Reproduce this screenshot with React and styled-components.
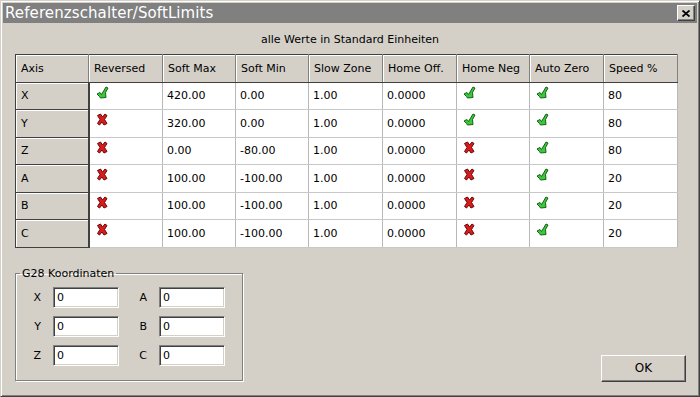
import React from 'react';
import styled, { createGlobalStyle } from 'styled-components';

const GlobalStyle = createGlobalStyle`
  html, body {
    margin: 0;
    padding: 0;
    background: #d4d0c8;
  }
  * {
    box-sizing: border-box;
  }
`;

// Window frame
const Window = styled.div`
  width: 700px;
  height: 397px;
  display: flex;
  flex-direction: column;
  background: #d4d0c8;
  border: 1px solid;
  border-color: #d4d0c8 #404040 #404040 #d4d0c8;
  box-shadow: inset 1px 1px #fff, inset -1px -1px #808080;
  padding: 2px 2px 2px 2px;
  font-family: "DejaVu Sans", "Liberation Sans", sans-serif;
  font-size: 11px;
  color: #000;
`;

const TitleBar = styled.div`
  height: 20px;
  background: #808080;
  display: flex;
  align-items: center;
  justify-content: space-between;
  padding: 0 2px 0 2px;
`;

const Title = styled.span`
  color: #fff;
  font-size: 15px;
  letter-spacing: 0.1px;
`;

const CloseButton = styled.button`
  width: 18px;
  height: 16px;
  padding: 0;
  background: #d4d0c8;
  border: 1px solid;
  border-color: #fff #404040 #404040 #fff;
  box-shadow: inset -1px -1px #808080;
  display: flex;
  align-items: center;
  justify-content: center;
`;

const Body = styled.div`
  flex: 1;
  display: flex;
  flex-direction: column;
  padding: 10px 20px 13px 12px;
`;

const Caption = styled.div`
  height: 14px;
  line-height: 14px;
  text-align: center;
  padding-left: 8px;
  margin-bottom: 7px;
`;

// Grid
const Grid = styled.table`
  border-collapse: collapse;
  table-layout: fixed;
  width: 662px;
  border: 1px solid;
  border-color: #404040 #e8e8e8 #e8e8e8 #404040;
  background: #fff;
`;

const HeadCell = styled.th`
  height: 27.5px;
  padding: 0 0 0 5px;
  text-align: left;
  font-weight: normal;
  background: #d4d0c8;
  border-right: 1px solid #808080;
  border-bottom: 1px solid #404040;
  box-shadow: inset 1px 1px #fff;
  white-space: nowrap;
`;

const AxisCell = styled.td`
  height: 27.5px;
  padding: 0 0 0 5px;
  background: #d4d0c8;
  border-right: 2px solid #404040;
  border-bottom: 1px solid #404040;
  box-shadow: inset 1px 1px #fff;
`;

const Cell = styled.td`
  height: 27.5px;
  padding: 0 0 0 4px;
  border-right: 1px solid #b8b8b8;
  border-bottom: 1px solid #c8c8c8;
  vertical-align: ${(p) => (p.$icon ? 'top' : 'middle')};
  padding-top: ${(p) => (p.$icon ? '3px' : '0')};
  padding-left: ${(p) => (p.$icon ? '6px' : '4px')};
`;

// Bottom area
const Footer = styled.div`
  margin-top: 19px;
  display: flex;
  justify-content: space-between;
  align-items: flex-end;
`;

const GroupBox = styled.fieldset`
  width: 228px;
  margin: 0;
  padding: 0;
  border: 1px solid #808080;
  box-shadow: inset 1px 1px #fff, 1px 1px #fff;
`;

const GroupTitle = styled.legend`
  margin-left: 4px;
  padding: 0 2px;
  line-height: 14px;
`;

const CoordGrid = styled.div`
  display: grid;
  grid-template-columns: 23px 66px 40px 66px;
  grid-auto-rows: 21px;
  row-gap: 8px;
  padding: 6px 0 14px 14px;
`;

const CoordLabel = styled.label`
  text-align: right;
  padding-right: 12px;
  line-height: 21px;
`;

const CoordInput = styled.input`
  width: 66px;
  height: 21px;
  margin: 0;
  padding: 0 3px;
  font: inherit;
  color: #000;
  background: #fff;
  border: 1px solid;
  border-color: #808080 #fff #fff #808080;
  box-shadow: inset 1px 1px #404040, inset -1px -1px #d4d0c8;
  outline: none;
`;

const OkButton = styled.button`
  width: 85px;
  height: 27px;
  margin: 0 -9px -1px 0;
  padding: 0;
  font: inherit;
  font-size: 12px;
  color: #000;
  background: #d4d0c8;
  border: 1px solid;
  border-color: #fff #404040 #404040 #fff;
  box-shadow: inset -1px -1px #808080;
`;

const CheckIcon = () => (
  <svg width="13" height="13" viewBox="0 0 13 13">
    <path
      d="M1 8 L4 6.5 L5.5 8.5 L10 1 L12 2 L9.5 6.5 L10 11.5 L4.5 12 L3.5 10.5 Z"
      fill="#3cc83c"
      stroke="#146014"
      strokeWidth="1"
      strokeLinejoin="round"
    />
  </svg>
);

const CrossIcon = () => (
  <svg width="13" height="13" viewBox="0 0 13 13">
    <path
      d="M1.5 2.5 L4.5 1 L6.5 4 L9 1 L11 2.5 L8.5 6.5 L11 10.5 L8 12 L6 9 L3.5 12 L1.5 10.5 L4 6.5 Z"
      fill="#d81c1c"
      stroke="#6a0808"
      strokeWidth="1"
      strokeLinejoin="round"
    />
  </svg>
);

const columns = [
  { label: 'Axis', width: 73 },
  { label: 'Reversed', width: 74 },
  { label: 'Soft Max', width: 73 },
  { label: 'Soft Min', width: 73 },
  { label: 'Slow Zone', width: 74 },
  { label: 'Home Off.', width: 74 },
  { label: 'Home Neg', width: 73 },
  { label: 'Auto Zero', width: 74 },
  { label: 'Speed %', width: 74 },
];

const axes = [
  { axis: 'X', reversed: true, max: '420.00', min: '0.00', slow: '1.00', off: '0.0000', neg: true, zero: true, speed: '80' },
  { axis: 'Y', reversed: false, max: '320.00', min: '0.00', slow: '1.00', off: '0.0000', neg: true, zero: true, speed: '80' },
  { axis: 'Z', reversed: false, max: '0.00', min: '-80.00', slow: '1.00', off: '0.0000', neg: false, zero: true, speed: '80' },
  { axis: 'A', reversed: false, max: '100.00', min: '-100.00', slow: '1.00', off: '0.0000', neg: false, zero: true, speed: '20' },
  { axis: 'B', reversed: false, max: '100.00', min: '-100.00', slow: '1.00', off: '0.0000', neg: false, zero: true, speed: '20' },
  { axis: 'C', reversed: false, max: '100.00', min: '-100.00', slow: '1.00', off: '0.0000', neg: false, zero: true, speed: '20' },
];

const g28 = [
  ['X', 'A'],
  ['Y', 'B'],
  ['Z', 'C'],
];

const Flag = ({ on }) => (on ? <CheckIcon /> : <CrossIcon />);

const App = () => {
  return (
    <>
      <GlobalStyle />
      <Window>
        <TitleBar>
          <Title>Referenzschalter/SoftLimits</Title>
          <CloseButton aria-label="close">
            <svg width="8" height="7" viewBox="0 0 8 7">
              <path d="M0.5 0.5 L7.5 6.5 M7.5 0.5 L0.5 6.5" stroke="#000" strokeWidth="1.8" />
            </svg>
          </CloseButton>
        </TitleBar>

        <Body>
          <Caption>alle Werte in Standard Einheiten</Caption>

          <Grid>
            <colgroup>
              {columns.map((c) => (
                <col key={c.label} style={{ width: c.width }} />
              ))}
            </colgroup>
            <thead>
              <tr>
                {columns.map((c) => (
                  <HeadCell key={c.label}>{c.label}</HeadCell>
                ))}
              </tr>
            </thead>
            <tbody>
              {axes.map((row) => (
                <tr key={row.axis}>
                  <AxisCell>{row.axis}</AxisCell>
                  <Cell $icon>
                    <Flag on={row.reversed} />
                  </Cell>
                  <Cell>{row.max}</Cell>
                  <Cell>{row.min}</Cell>
                  <Cell>{row.slow}</Cell>
                  <Cell>{row.off}</Cell>
                  <Cell $icon>
                    <Flag on={row.neg} />
                  </Cell>
                  <Cell $icon>
                    <Flag on={row.zero} />
                  </Cell>
                  <Cell>{row.speed}</Cell>
                </tr>
              ))}
            </tbody>
          </Grid>

          <Footer>
            <GroupBox>
              <GroupTitle>G28 Koordinaten</GroupTitle>
              <CoordGrid>
                {g28.map(([left, right]) => (
                  <React.Fragment key={left}>
                    <CoordLabel>{left}</CoordLabel>
                    <CoordInput readOnly value="0" />
                    <CoordLabel>{right}</CoordLabel>
                    <CoordInput readOnly value="0" />
                  </React.Fragment>
                ))}
              </CoordGrid>
            </GroupBox>
            <OkButton>OK</OkButton>
          </Footer>
        </Body>
      </Window>
    </>
  );
};

export default App;
